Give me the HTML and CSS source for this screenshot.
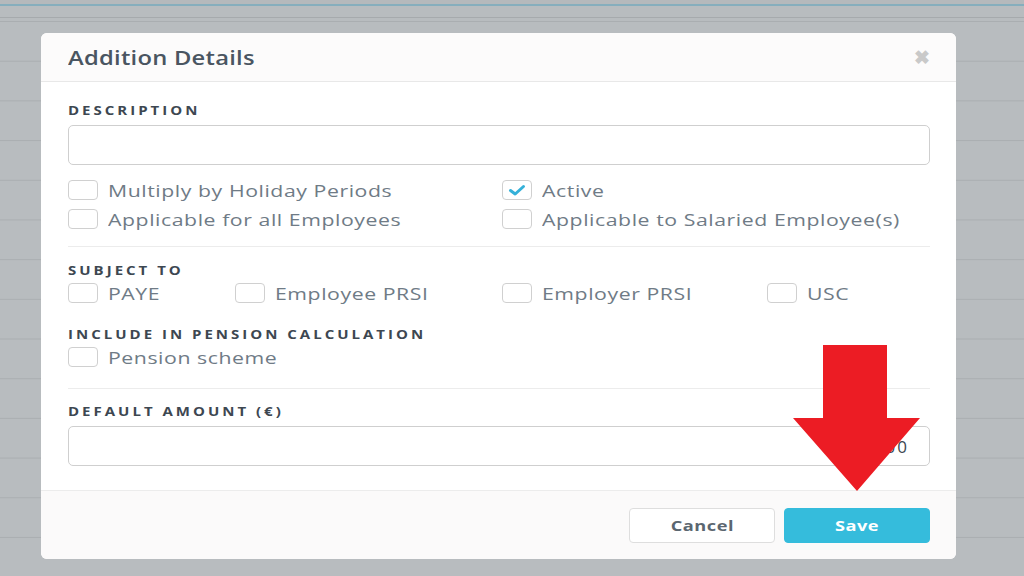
FILE: index.html
```html
<!DOCTYPE html>
<html lang="en">
<head>
<meta charset="utf-8"/>
<meta content="width=device-width, initial-scale=1.0" name="viewport"/>
<title>Addition Details</title>
<link rel="stylesheet" href="styles.css">
</head>
<body>
<div class="topbar"></div>
<div class="modal">
  <div class="modal-header">
    <h2><span class="txt">Addition Details</span></h2>
    <span class="close">&#10006;</span>
  </div>
  <div class="modal-body">
    <div class="label"><span class="txt">Description</span></div>
    <input class="field" type="text"/>
    <div class="checks two">
      <label class="check"><span class="box"></span><span class="txt">Multiply by Holiday Periods</span></label>
      <label class="check"><span class="box checked"><svg viewBox="0 0 20 20" width="20" height="20"><path d="M3.5 10.5 L8.2 14 L16.5 6.5" fill="none" stroke="#35b1d9" stroke-width="3" stroke-linecap="round" stroke-linejoin="round"/></svg></span><span class="txt">Active</span></label>
      <label class="check"><span class="box"></span><span class="txt">Applicable for all Employees</span></label>
      <label class="check"><span class="box"></span><span class="txt">Applicable to Salaried Employee(s)</span></label>
    </div>
    <hr class="divider"/>
    <div class="label"><span class="txt">Subject To</span></div>
    <div class="checks four">
      <label class="check"><span class="box"></span><span class="txt">PAYE</span></label>
      <label class="check"><span class="box"></span><span class="txt">Employee PRSI</span></label>
      <label class="check"><span class="box"></span><span class="txt">Employer PRSI</span></label>
      <label class="check"><span class="box"></span><span class="txt">USC</span></label>
    </div>
    <div class="label spaced"><span class="txt">Include in Pension Calculation</span></div>
    <div class="checks one">
      <label class="check"><span class="box"></span><span class="txt">Pension scheme</span></label>
    </div>
    <hr class="divider lower"/>
    <div class="label"><span class="txt">Default Amount (&euro;)</span></div>
    <input class="field amount" type="text" value="0.00"/>
  </div>
  <div class="modal-footer">
    <button class="btn cancel"><span class="txt">Cancel</span></button>
    <button class="btn save"><span class="txt">Save</span></button>
  </div>
  <svg class="arrow" viewBox="0 0 128 147" width="128" height="147">
    <polygon points="30,0 94,0 94,73 127,73 64,146 0,73 30,73" fill="#ec1c24"/>
  </svg>
</div>
</body>
</html>
```
FILE: styles.css
```css
body {
  margin: 0;
  height: 576px;
  overflow: hidden;
  font-family: 'Open Sans', sans-serif;
  background-color: #b8bcbf;
  background-image: linear-gradient(to bottom, transparent 0, transparent 39px, #aaaeb1 39px, #aaaeb1 40px);
  background-size: 100% 39.7px;
  background-position: 0 22px;
}
.topbar {
  height: 18px;
  border-bottom: 1px solid #a6aaad;
  box-sizing: border-box;
  background: linear-gradient(to bottom, #b5b9bc 0, #b5b9bc 4px, #86aebd 4px, #86aebd 6px, #b8bcbf 6px);
}
/* the capture is stretched sideways, so text is widened to match */
.txt {
  display: inline-block;
  transform: scaleX(1.25);
  transform-origin: left center;
}
.modal {
  position: relative;
  width: 915px;
  margin: 15px 0 0 41px;
  background: #fff;
  border-radius: 6px;
}
.modal-header {
  display: flex;
  align-items: center;
  justify-content: space-between;
  box-sizing: border-box;
  height: 49px;
  padding: 2px 26px 0 27px;
  background: #fcfbfb;
  border-bottom: 1px solid #e8e8e8;
  border-radius: 6px 6px 0 0;
}
.modal-header h2 {
  margin: 0;
  font-size: 19px;
  font-weight: 600;
  color: #4a5561;
  letter-spacing: 0.2px;
}
.close {
  color: #c9c9c9;
  font-size: 19px;
  font-weight: bold;
  margin-top: -2px;
}
.modal-body {
  padding: 21px 26px 24px 27px;
}
.label {
  font-size: 12px;
  line-height: 16px;
  font-weight: 700;
  text-transform: uppercase;
  letter-spacing: 2.4px;
  color: #3d4751;
}
.label.spaced {
  margin-top: 20px;
}
.field {
  display: block;
  box-sizing: border-box;
  width: 100%;
  height: 40px;
  margin-top: 6px;
  border: 1px solid #cfcfcf;
  border-radius: 5px;
  font-family: 'Open Sans', sans-serif;
  font-size: 17px;
  letter-spacing: 2px;
  color: #3d4751;
  padding: 0 20px;
  outline: none;
}
.field.amount {
  text-align: right;
}
.checks {
  display: grid;
}
.checks.two {
  grid-template-columns: 434px 1fr;
  margin-top: 11px;
  row-gap: 1px;
}
.checks.four {
  grid-template-columns: 167px 267px 265px 1fr;
}
.check {
  display: flex;
  align-items: center;
  height: 28px;
  font-size: 17px;
  letter-spacing: 0.45px;
  color: #6f7b86;
  white-space: nowrap;
}
.box {
  display: inline-block;
  flex: none;
  box-sizing: border-box;
  width: 30px;
  height: 20px;
  border: 1px solid #d0d0d0;
  border-radius: 4px;
  margin-right: 10px;
}
.box svg {
  display: block;
  margin: -1px auto 0;
}
.divider {
  border: 0;
  border-top: 1px solid #ececec;
  margin: 13px 0 16px;
}
.divider.lower {
  margin: 17px 0 15px;
}
.modal-footer {
  display: flex;
  justify-content: flex-end;
  gap: 9px;
  padding: 17px 26px 16px;
  background: #fbfafa;
  border-top: 1px solid #ececec;
  border-radius: 0 0 6px 6px;
}
.btn {
  width: 146px;
  height: 35px;
  border-radius: 4px;
  font-family: 'Open Sans', sans-serif;
  font-size: 14px;
  font-weight: 700;
  letter-spacing: 0.4px;
}
.btn .txt {
  transform: scaleX(1.3);
  transform-origin: center;
}
.cancel {
  background: #fff;
  border: 1px solid #dedede;
  color: #5b6670;
}
.save {
  background: #35bcdc;
  border: 1px solid #35bcdc;
  color: #fff;
}
.arrow {
  position: absolute;
  left: 752px;
  top: 312px;
}
```
